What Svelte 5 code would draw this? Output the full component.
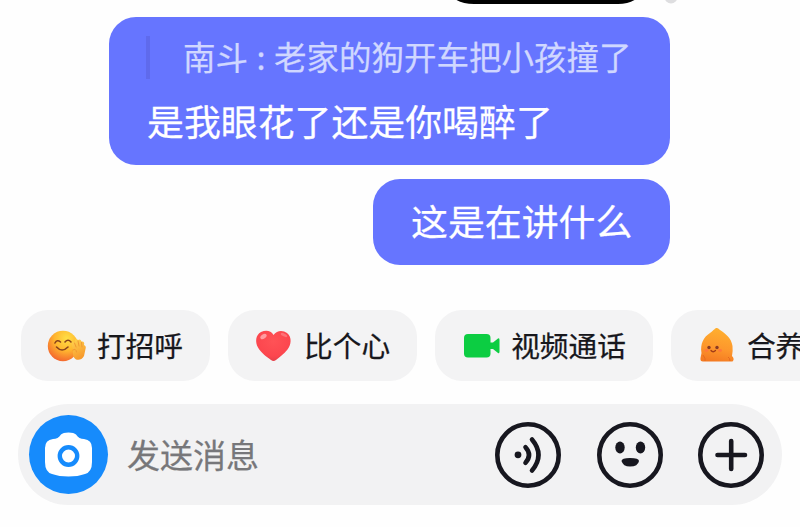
<script lang="ts">
	type Action = { icon: 'greet' | 'heart' | 'video' | 'spark'; label: string };

	const actions: Action[] = [
		{ icon: 'greet', label: '打招呼' },
		{ icon: 'heart', label: '比个心' },
		{ icon: 'video', label: '视频通话' },
		{ icon: 'spark', label: '合养' }
	];

	const quote = { name: '南斗', text: '老家的狗开车把小孩撞了' };
</script>

<div class="chat">
	<svg class="previous" width="800" height="17" viewBox="0 0 800 17" aria-hidden="true">
		<path d="M455 -1Q462 4 474 4H618Q629 4 636 -1Z" fill="#000" />
		<circle cx="671" cy="-3" r="6.500" fill="#dedee0" />
	</svg>

	<div class="messages">
		<div class="bubble reply">
			<div class="quote">
				<span class="bar"></span>
				<span class="name">{quote.name}</span>
				<span class="colon">:</span>
				<span>{quote.text}</span>
			</div>
			<div class="text">是我眼花了还是你喝醉了</div>
		</div>
		<div class="bubble">
			<div class="text">这是在讲什么</div>
		</div>
	</div>

	<div class="actions">
		{#each actions as action}
			<button class="chip">
				<svg width="40" height="36" viewBox="0 0 40 36" aria-hidden="true">
					{#if action.icon === 'greet'}
						<defs>
							<radialGradient id="face" cx="0.62" cy="0.25" r="0.8">
								<stop offset="0" stop-color="#ffdf45" />
								<stop offset="0.5" stop-color="#ffb62f" />
								<stop offset="1" stop-color="#f3612e" />
							</radialGradient>
							<linearGradient id="hand" x1="0" y1="0" x2="0.4" y2="1">
								<stop offset="0" stop-color="#ffd550" />
								<stop offset="1" stop-color="#f79a2c" />
							</linearGradient>
						</defs>
						<circle cx="16" cy="18" r="15.2" fill="url(#face)" />
						<path
							d="M8 15Q10 11 13.500 14M18 14Q21 10.500 24 14M9.500 19Q15 25 21 19"
							fill="none"
							stroke="#8b431b"
							stroke-width="1.600"
							stroke-linecap="round"
						/>
						<path
							d="M26 22L24.500 16Q25 12.500 27.500 14Q28 9.500 31 12Q33.500 10.500 34.500 13.500Q38 13 37 17Q39.500 18 38.500 21L37 28Q34 33 29 31.500Q25 29 26 22Z"
							fill="url(#hand)"
						/>
						<path
							d="M27.500 15L29 19M31 13L32 18M34.500 14.500L35 19M26 22Q29 20 29.500 24"
							fill="none"
							stroke="#ee9430"
							stroke-width="0.900"
							stroke-linecap="round"
						/>
					{:else if action.icon === 'heart'}
						<defs>
							<radialGradient id="heart" cx="0.5" cy="0.35" r="0.7">
								<stop offset="0" stop-color="#ff5256" />
								<stop offset="0.7" stop-color="#fc464e" />
								<stop offset="1" stop-color="#df3f49" />
							</radialGradient>
						</defs>
						<path
							d="M19.500 7C23 2 29 2 33 5C38.500 9.500 37 17 33.500 21.500C30 26 25 29.500 22 32Q19.500 33.800 17 32C13 29 7 25 4 19.500C1 14 1.500 7 7 4C12 1.800 17 2.500 19.500 7Z"
							fill="url(#heart)"
						/>
						<ellipse cx="9.500" cy="8.500" rx="3.500" ry="2.200" fill="#ffb0b4" opacity="0.8" transform="rotate(-35 9.500 8.500)" />
						<ellipse cx="30" cy="7" rx="3.500" ry="1.500" fill="#ff9ba0" opacity="0.5" transform="rotate(25 30 7)" />
					{:else if action.icon === 'video'}
						<rect x="3" y="6" width="26.500" height="23.500" rx="4" fill="#0ccd42" />
						<path d="M28 14.500H32L37 10.500Q38.500 9.500 38.500 12V23.500Q38.500 26 37 25L32 21H28Z" fill="#0ccd42" />
					{:else}
						<defs>
							<linearGradient id="spark" x1="0.6" y1="0" x2="0.4" y2="1">
								<stop offset="0" stop-color="#ffb02f" />
								<stop offset="0.6" stop-color="#fd972c" />
								<stop offset="1" stop-color="#f47a22" />
							</linearGradient>
						</defs>
						<path
							d="M20 0Q21 0 23 2C28 5.500 34.500 10 35.500 18Q36 23 35 28Q38 31 35.500 33.500H6Q3 33.500 3.500 30L4.500 25C3 16 6.500 9 13 5C17 2 18 0 20 0Z"
							fill="url(#spark)"
						/>
						<circle cx="12" cy="19.500" r="1.700" fill="#8a3a24" />
						<circle cx="20" cy="19.500" r="1.700" fill="#8a3a24" />
						<ellipse cx="9.500" cy="22.500" rx="2" ry="1.400" fill="#ff7a3a" />
						<ellipse cx="23" cy="22.500" rx="2" ry="1.400" fill="#ff7a3a" />
						<path d="M14 22.500Q16 25 18.500 22.500" fill="none" stroke="#a13b17" stroke-width="1.300" stroke-linecap="round" />
						<path d="M6 27Q9 31 8 33M31 29Q33 30 33 33" fill="none" stroke="#e56a20" stroke-width="1" />
					{/if}
				</svg>
				<span>{action.label}</span>
			</button>
		{/each}
	</div>

	<div class="composer">
		<button class="camera" aria-label="拍摄">
			<svg width="79" height="79" viewBox="0 0 79 79">
				<path
					d="M24 24Q29 24 32 19.500Q34 17.500 39.500 17.500Q45 17.500 47 19.500Q50 24 55 24Q63 25 63 33V47Q63 57 56 59Q49 61.500 39.500 61.500Q30 61.500 23 59Q16 57 16 47V33Q16 25 24 24Z"
					fill="#fff"
				/>
				<circle cx="39.500" cy="41" r="8.700" fill="#fff" stroke="#168bfc" stroke-width="4.400" />
			</svg>
		</button>
		<span class="placeholder">发送消息</span>
		<div class="tools">
			<svg width="66" height="66" viewBox="0 0 66 66">
				<circle cx="33" cy="33" r="30.700" />
				<circle cx="23" cy="32.800" r="3.400" class="solid" />
				<path d="M30.500 25.300Q37.500 33 30.500 40.700M37 17.500Q50 33 37 48.500" />
			</svg>
			<svg width="66" height="66" viewBox="0 0 66 66">
				<circle cx="33" cy="33" r="30.700" />
				<ellipse cx="23" cy="25.500" rx="4.700" ry="6" class="solid" />
				<ellipse cx="43.500" cy="25.500" rx="4.700" ry="6" class="solid" />
				<path d="M24.500 39Q24.500 36 33 36Q42 36 42 39Q41 44.500 33 44.500Q26 44.500 24.500 39Z" class="solid" />
			</svg>
			<svg width="66" height="66" viewBox="0 0 66 66">
				<circle cx="33" cy="33" r="30.700" />
				<path d="M19.500 33H47M33.200 19V47" />
			</svg>
		</div>
	</div>
</div>

<style>
	:global(body) {
		background: #fefefe;
	}

	.chat {
		width: 800px;
		height: 527px;
		overflow: hidden;
		font-family: 'Noto Sans CJK SC', sans-serif;
		-webkit-text-stroke: 0.25px currentColor;
	}

	.previous {
		display: block;
	}

	.messages {
		display: flex;
		flex-direction: column;
		align-items: flex-end;
		gap: 13.5px;
		padding-right: 130.5px;
	}

	.bubble {
		box-sizing: border-box;
		width: 296.5px;
		height: 86.5px;
		padding: 18.5px 38px 0;
		border-radius: 27px;
		background: #6675ff;
		color: #fff;
		white-space: nowrap;
	}

	.reply {
		width: 560.5px;
		height: 148px;
		padding-top: 16px;
	}

	.quote {
		display: flex;
		align-items: center;
		height: 46px;
		margin-bottom: 18px;
		font-size: 32.5px;
		line-height: 46px;
		color: #d0d7ff;
	}

	.bar {
		width: 4px;
		height: 43px;
		margin: 2px 33px 0 -1px;
		background: #5f6aec;
	}

	.colon {
		width: 26px;
		text-align: center;
	}

	.text {
		font-size: 36.9px;
		line-height: 46px;
	}

	.actions {
		display: flex;
		gap: 18px;
		margin-top: 45px;
		padding-left: 21px;
	}

	button {
		border: 0;
		font-family: inherit;
	}

	.chip {
		display: flex;
		flex: none;
		align-items: center;
		gap: 10px;
		height: 71px;
		padding: 0 27px 0 26px;
		border-radius: 27px;
		background: #f3f3f4;
		color: #17171c;
		font-size: 28.7px;
		line-height: 40px;
		-webkit-text-stroke: 0.25px currentColor;
	}

	.chip span {
		padding-bottom: 2px;
	}

	.composer {
		box-sizing: border-box;
		display: flex;
		align-items: center;
		width: 764px;
		height: 101px;
		margin: 23px 0 0 18px;
		padding: 0 18px 0 11px;
		border-radius: 51px;
		background: #f2f2f3;
	}

	.camera {
		width: 79px;
		height: 79px;
		padding: 0;
		border-radius: 50%;
		background: #168bfc;
	}

	.camera svg {
		display: block;
	}

	.placeholder {
		margin-left: 19px;
		padding-bottom: 1px;
		font-size: 33px;
		line-height: 46px;
		color: #77777a;
	}

	.tools {
		display: flex;
		gap: 35.5px;
		margin-left: auto;
	}

	.tools svg {
		fill: none;
		stroke: #17171f;
		stroke-width: 4.6;
		stroke-linecap: round;
	}

	.tools .solid {
		fill: #17171f;
		stroke: none;
	}
</style>
